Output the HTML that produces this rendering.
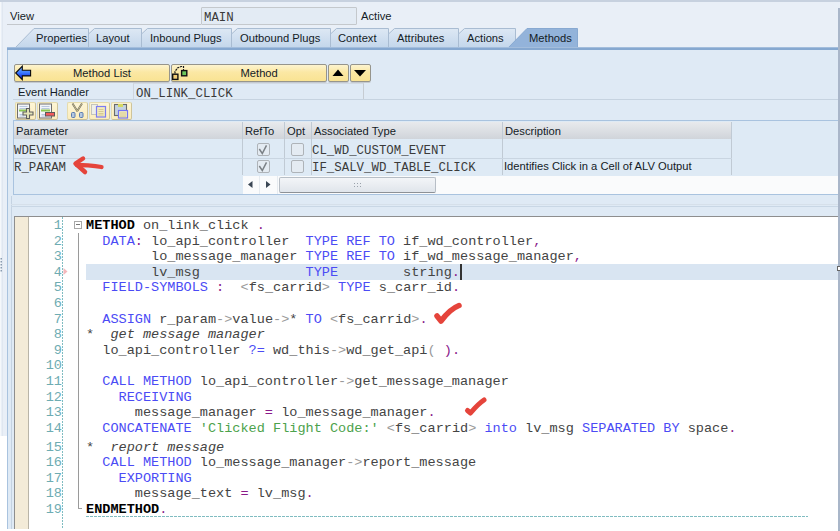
<!DOCTYPE html>
<html><head><meta charset="utf-8">
<style>
*{margin:0;padding:0;box-sizing:border-box}
html,body{width:840px;height:531px;overflow:hidden}
body{position:relative;background:#e9eff7;font-family:"Liberation Sans",sans-serif;font-size:11.2px;color:#141b26}
.a{position:absolute}
.t{position:absolute;white-space:pre;line-height:13px}
.m{font-family:"Liberation Mono",monospace;font-size:12.4px;color:#3a3a3a}
.btn{position:absolute;top:64px;height:18px;border:1px solid #96958c;border-radius:2px;background:linear-gradient(#fdf4cf,#fbe8a4 45%,#f9e393);box-shadow:0 1px 0 #c4c9cf}
.tb{position:absolute;top:102px;height:18px;width:21px;border:1px solid #e6dcae;border-right-color:#cfc49a;border-bottom-color:#c9bf98;border-radius:2px;background:linear-gradient(#fdf5d6,#fcedbd)}
.hd{position:absolute;top:122px;height:17px;background:linear-gradient(#e8eaed,#d0d4da)}
.cb{position:absolute;width:13px;height:13px;border:1px solid #aeb3b8;background:#e4ebf2;border-radius:2px}
.code{position:absolute;left:86px;top:218px;font-family:"Liberation Mono",monospace;font-size:13.56px;line-height:15.6px;white-space:pre;color:#444}
.k{color:#4b4bf5}
.p{color:#8a1a8a}
.g{color:#9a9a9a}
.s{color:#4ca24c}
.b{font-weight:bold;color:#000}
.c{font-style:italic}
.num{position:absolute;left:28px;width:34px;top:218px;text-align:right;font-family:"Liberation Mono",monospace;font-size:13.56px;line-height:15.6px;white-space:pre;color:#6eacb2}
</style></head><body>
<!-- frame strips -->
<div class="a" style="left:0;top:0;width:840px;height:2px;background:#c7d1df"></div>
<div class="a" style="left:0;top:2px;width:1px;height:434px;background:#f5f8fb"></div>
<div class="a" style="left:0;top:436px;width:7px;height:95px;background:#fff"></div>
<div class="a" style="left:2px;top:2px;width:1px;height:434px;background:#e0e7f0"></div>

<svg class="a" style="left:0;top:257px" width="3" height="16"><g fill="#8a9bb0"><rect x="0.5" y="1" width="1.5" height="1.5"/><rect x="0.5" y="4" width="1.5" height="1.5"/><rect x="0.5" y="7" width="1.5" height="1.5"/><rect x="0.5" y="10" width="1.5" height="1.5"/><rect x="0.5" y="13" width="1.5" height="1.5"/></g></svg>
<!-- View row -->
<div class="t" style="left:10px;top:10px">View</div>
<div class="a" style="left:7px;top:24px;width:194px;height:1px;background:#c3c7cc"></div>
<div class="a" style="left:201px;top:7px;width:156px;height:18px;border:1px solid #c4c8cc;border-radius:1px;background:#e3ebf4"></div>
<div class="t m" style="left:204px;top:12px">MAIN</div>
<div class="t" style="left:361px;top:10px">Active</div>

<!-- tabs -->
<svg class="a" style="left:0;top:0" width="840" height="60">
 <defs>
  <linearGradient id="tg" x1="0" y1="0" x2="0" y2="1"><stop offset="0" stop-color="#dde8f4"/><stop offset="1" stop-color="#c3d6eb"/></linearGradient>
 </defs>
 <g fill="url(#tg)" stroke="#a9bcd2" stroke-width="1">
  <polygon points="15,48 34,28.5 88.5,28.5 88.5,48"/>
  <polygon points="88.5,48 88.5,34 94.5,28.5 141.5,28.5 141.5,48"/>
  <polygon points="141.5,48 141.5,34 147.5,28.5 231.5,28.5 231.5,48"/>
  <polygon points="231.5,48 231.5,34 237.5,28.5 330.5,28.5 330.5,48"/>
  <polygon points="330.5,48 330.5,34 336.5,28.5 388.5,28.5 388.5,48"/>
  <polygon points="388.5,48 388.5,34 394.5,28.5 458.5,28.5 458.5,48"/>
  <polygon points="458.5,48 458.5,34 464.5,28.5 515.5,28.5 515.5,48"/>
 </g>
 <polygon points="508,48 527,28.5 577.5,28.5 577.5,48" fill="#93b3da" stroke="#88a9d1" stroke-width="1"/>
</svg>
<div class="t" style="left:36px;top:32px">Properties</div>
<div class="t" style="left:96px;top:32px">Layout</div>
<div class="t" style="left:150px;top:32px">Inbound Plugs</div>
<div class="t" style="left:240px;top:32px">Outbound Plugs</div>
<div class="t" style="left:338px;top:32px">Context</div>
<div class="t" style="left:397px;top:32px">Attributes</div>
<div class="t" style="left:467px;top:32px">Actions</div>
<div class="t" style="left:529px;top:32px">Methods</div>

<!-- tab strip bottom + content -->
<div class="a" style="left:7px;top:47px;width:831px;height:3px;background:#86a8d0;border-top:1px solid #a3bddc"></div>
<div class="a" style="left:7px;top:50px;width:831px;height:481px;background:#dfeaf5;border-left:1px solid #a9c3df"></div>
<div class="a" style="left:838px;top:8px;width:2px;height:523px;background:#a9b6c9"></div>

<!-- buttons -->
<div class="btn" style="left:14px;width:156px"></div>
<div class="btn" style="left:171px;width:156px"></div>
<div class="btn" style="left:328px;width:21px"></div>
<div class="btn" style="left:350px;width:21px"></div>
<svg class="a" style="left:14px;top:65px" width="18" height="16">
 <defs><linearGradient id="ag" x1="0" y1="0" x2="0" y2="1"><stop offset="0" stop-color="#7ab8ff"/><stop offset="0.5" stop-color="#3a78ff"/><stop offset="1" stop-color="#0008d8"/></linearGradient></defs>
 <path d="M1.7,8 L8.3,1.2 L8.3,5.2 L16.6,5.2 L16.6,10.9 L8.3,10.9 L8.3,14.6 Z" fill="url(#ag)" stroke="#0a0a0a" stroke-width="1.1" stroke-linejoin="miter"/>
</svg>
<div class="t" style="left:73px;top:67px">Method List</div>
<svg class="a" style="left:171px;top:64px" width="18" height="18">
 <path d="M4,9.5 L4,7.5 L6.5,4 L10,2.5 L12.5,2.5 L12.5,6.5" fill="none" stroke="#1a1a1a" stroke-width="1.2" stroke-dasharray="2.2,0.8"/>
 <rect x="1.7" y="10.2" width="5.2" height="5.2" fill="#f3cf78" stroke="#111" stroke-width="1.4"/>
 <rect x="10.6" y="6.6" width="5.2" height="5.2" fill="#6cc85c" stroke="#111" stroke-width="1.4"/>
</svg>
<div class="t" style="left:240.5px;top:67px">Method</div>
<svg class="a" style="left:328px;top:64px" width="44" height="18">
 <polygon points="10,5.5 15.5,12 4.5,12" fill="#000"/>
 <polygon points="26,6 38,6 32,12.5" fill="#000"/>
</svg>

<!-- event handler -->
<div class="t" style="left:18px;top:86px">Event Handler</div>
<div class="a" style="left:133px;top:83px;width:231px;height:17px;border-right:1px solid #c6ccd2;border-left:1px solid #cfd6de;border-top:1px solid #d3dbe4"></div>
<div class="a" style="left:13px;top:99px;width:825px;height:1px;background:#c6d3e0"></div>
<div class="t m" style="left:136px;top:88px">ON_LINK_CLICK</div>

<!-- toolbar -->
<div class="tb" style="left:15px"></div>
<div class="tb" style="left:37px"></div>
<div class="tb" style="left:67px"></div>
<div class="tb" style="left:89px"></div>
<div class="tb" style="left:111px"></div>
<svg class="a" style="left:0;top:100px" width="140" height="22">
 <!-- insert row -->
 <rect x="17.5" y="4" width="12" height="14" fill="#f2f5f9" stroke="#6e6e6e" stroke-width="1"/>
 <path d="M19.5,6.5h8M19.5,8.5h8M19.5,14.5h5M19.5,16h5" stroke="#b8c8de" stroke-width="1"/>
 <rect x="19" y="9.5" width="9" height="2" fill="#8cc850"/>
 <path d="M26.5,8.5 h3 v3.5 h3.5 v3 h-3.5 v3.5 h-3 v-3.5 h-3.5 v-3 h3.5z" fill="#e6e6b8" stroke="#5e5e5e" stroke-width="1.1"/>
 <!-- delete row -->
 <rect x="39.5" y="4" width="12" height="14" fill="#f2f5f9" stroke="#6e6e6e" stroke-width="1"/>
 <path d="M41.5,6.5h8M41.5,8.5h8M41.5,14.5h5M41.5,16h5" stroke="#b8c8de" stroke-width="1"/>
 <rect x="41" y="9.5" width="9" height="2" fill="#8cc850"/>
 <rect x="45.5" y="12.5" width="9" height="3.5" fill="#f25a5a" stroke="#5a5a5a" stroke-width="1"/>
 <!-- scissors -->
 <path d="M72.5,3.5 L77.5,11.5 M82,3.5 L77,11.5" stroke="#666" stroke-width="1.8"/>
 <path d="M72.5,3.5 L77.5,11.5 M82,3.5 L77,11.5" stroke="#f0e090" stroke-width="0.7"/>
 <rect x="71.5" y="12.5" width="3.5" height="5" rx="1" fill="#b4c8e0" stroke="#5b7cb0" stroke-width="1"/>
 <rect x="79.5" y="12.5" width="3.5" height="5" rx="1" fill="#b4c8e0" stroke="#5b7cb0" stroke-width="1"/>
 <!-- copy -->
 <rect x="91.5" y="4.5" width="6" height="10" fill="#efefe8" stroke="#c4c4bc" stroke-width="1"/>
 <rect x="96.5" y="6.5" width="9" height="10.5" fill="#f3ebbc" stroke="#7c7cf2" stroke-width="1.2"/>
 <path d="M98.5,9.5h5M98.5,11.5h5M98.5,13.5h5M98.5,15h5" stroke="#cfc28a" stroke-width="0.8"/>
 <!-- paste -->
 <rect x="114.5" y="4.5" width="12" height="11" fill="#c4d2e0" stroke="#6a6a6a" stroke-width="1.1"/>
 <rect x="118" y="4" width="5" height="3" fill="#d4d860"/>
 <rect x="118.5" y="10.5" width="9" height="7.5" fill="#f3ebbc" stroke="#7474f2" stroke-width="1.2"/>
 <path d="M120,13h6M120,15h6M120,16.8h6" stroke="#cfc28a" stroke-width="0.8"/>
</svg>

<!-- table -->
<div class="a" style="left:13px;top:120px;width:825px;height:75px;border:1px solid #a9c3df;border-right:none;background:#deeaf5"></div>
<div class="hd" style="left:14px;width:718px"></div>
<div class="a" style="left:242px;top:122px;width:1px;height:53px;background:#c0cad4"></div>
<div class="a" style="left:284px;top:122px;width:1px;height:53px;background:#c0cad4"></div>
<div class="a" style="left:311px;top:122px;width:1px;height:53px;background:#c0cad4"></div>
<div class="a" style="left:502px;top:122px;width:1px;height:53px;background:#c0cad4"></div>
<div class="a" style="left:731px;top:122px;width:1px;height:53px;background:#c0cad4"></div>
<div class="a" style="left:14px;top:158px;width:718px;height:1px;background:#c9d5e1"></div>
<div class="t" style="left:16px;top:125px">Parameter</div>
<div class="t" style="left:245px;top:125px">RefTo</div>
<div class="t" style="left:287px;top:125px">Opt</div>
<div class="t" style="left:314px;top:125px">Associated Type</div>
<div class="t" style="left:505px;top:125px">Description</div>
<div class="t m" style="left:14px;top:145px">WDEVENT</div>
<div class="t m" style="left:14px;top:162px">R_PARAM</div>
<div class="t m" style="left:312px;top:145px">CL_WD_CUSTOM_EVENT</div>
<div class="t m" style="left:312px;top:162px">IF_SALV_WD_TABLE_CLICK</div>
<div class="t" style="left:504px;top:160px">Identifies Click in a Cell of ALV Output</div>
<div class="cb" style="left:257px;top:143px"></div>
<div class="cb" style="left:291px;top:143px"></div>
<div class="cb" style="left:257px;top:160px"></div>
<div class="cb" style="left:291px;top:160px"></div>
<svg class="a" style="left:257px;top:143px" width="13" height="30">
 <path d="M2.3,6 L5.3,10.5 L9.5,2.3" fill="none" stroke="#7b8186" stroke-width="1.5"/>
 <path d="M2.3,23 L5.3,27.5 L9.5,19.3" fill="none" stroke="#7b8186" stroke-width="1.5"/>
</svg>
<!-- h scroll -->
<div class="a" style="left:243px;top:176px;width:595px;height:18px;background:#fafbfc"></div>
<div class="a" style="left:259px;top:176px;width:1px;height:18px;background:#e6ebf0"></div>
<div class="a" style="left:277px;top:176px;width:1px;height:18px;background:#e6ebf0"></div>
<svg class="a" style="left:243px;top:176px" width="36" height="18">
 <polygon points="5,8.5 9.5,5 9.5,12" fill="#3a4654"/>
 <polygon points="23,5 27.5,8.5 23,12" fill="#3a4654"/>
</svg>
<div class="a" style="left:279px;top:177px;width:157px;height:16px;border:1px solid #b7bec6;border-bottom-color:#8d9196;border-radius:2px;background:linear-gradient(#f3f5f8,#e0e5eb)"></div>

<svg class="a" style="left:354px;top:183px" width="8" height="6"><g fill="#9aa2ab"><rect x="0" y="0" width="1" height="1"/><rect x="3" y="0" width="1" height="1"/><rect x="6" y="0" width="1" height="1"/><rect x="0" y="3" width="1" height="1"/><rect x="3" y="3" width="1" height="1"/><rect x="6" y="3" width="1" height="1"/></g></svg>
<!-- splitter band -->
<div class="a" style="left:11px;top:196px;width:1px;height:335px;background:#c5d3e2"></div>
<div class="a" style="left:11px;top:204px;width:827px;height:1px;background:#d6e0ea"></div>
<div class="a" style="left:11px;top:206px;width:827px;height:1px;background:#c9d7e5"></div>

<!-- editor -->
<div class="a" style="left:14px;top:216px;width:824px;height:315px;background:#fff;border-top:1px solid #8e8e8e;border-left:1px solid #8e8e8e"></div>
<div class="a" style="left:15px;top:217px;width:14px;height:312px;background:#f3ebd8;border-right:1px solid #b8b4a8"></div>
<div class="a" style="left:86px;top:264px;width:752px;height:16px;background:#d9e5f2"></div>
<svg class="a" style="left:0;top:0" width="840" height="531"><line x1="62.5" y1="217" x2="62.5" y2="529" stroke="#80bcc1" stroke-width="1" stroke-dasharray="2,1"/><line x1="86" y1="516.5" x2="808" y2="516.5" stroke="#80bcc1" stroke-width="1" stroke-dasharray="3,1"/></svg>
<div class="a" style="left:74px;top:221px;width:8px;height:8px;border:1px solid #a8a8a8;background:#fff"></div>
<div class="a" style="left:76px;top:224px;width:4px;height:1px;background:#777"></div>
<div class="a" style="left:78px;top:233px;width:1px;height:276px;background:#9a9a9a"></div>
<div class="a" style="left:78px;top:508px;width:4px;height:1px;background:#a0a0a0"></div>
<div class="a" style="left:460px;top:264px;width:2px;height:16px;background:#333"></div>
<div class="a" style="left:837px;top:266px;width:3px;height:5px;background:#fff;border:1px solid #666;border-right:none"></div>
<svg class="a" style="left:63px;top:268px" width="6" height="8"><polygon points="0.5,0 4.5,3.5 0.5,7" fill="#f4b8bc"/></svg>

<div class="num">1
2
3
4
5
6
7
8
9
10
11
12
13
14</div>
<div class="num" style="top:439.6px">15
16
17
18
19</div>

<div class="code"><span class="b">METHOD</span> on_link_click <span class="p">.</span>
  <span class="k">DATA</span><span class="p">:</span> lo_api_controller  <span class="k">TYPE REF TO</span> if_wd_controller<span class="p">,</span>
        lo_message_manager <span class="k">TYPE REF TO</span> if_wd_message_manager<span class="p">,</span>
        lv_msg             <span class="k">TYPE</span>        string<span class="p">.</span>
  <span class="k">FIELD-SYMBOLS</span> <span class="p">:</span>  <span class="g">&lt;</span>fs_carrid<span class="g">&gt;</span> <span class="k">TYPE</span> s_carr_id<span class="p">.</span>

  <span class="k">ASSIGN</span> r_param<span class="g">-&gt;</span>value<span class="g">-&gt;</span>* <span class="k">TO</span> <span class="g">&lt;</span>fs_carrid<span class="g">&gt;</span><span class="p">.</span>
*  <span class="c">get message manager</span>
  lo_api_controller <span class="k">?=</span> wd_this<span class="g">-&gt;</span>wd_get_api<span class="g">(</span> <span class="p">)</span><span class="p">.</span>

  <span class="k">CALL METHOD</span> lo_api_controller<span class="g">-&gt;</span>get_message_manager
    <span class="k">RECEIVING</span>
      message_manager <span class="p">=</span> lo_message_manager<span class="p">.</span>
  <span class="k">CONCATENATE</span> <span class="s">'Clicked Flight Code:'</span> <span class="g">&lt;</span>fs_carrid<span class="g">&gt;</span> <span class="k">into</span> lv_msg <span class="k">SEPARATED BY</span> space<span class="p">.</span></div>
<div class="code" style="top:439.6px">*  <span class="c">report message</span>
  <span class="k">CALL METHOD</span> lo_message_manager<span class="g">-&gt;</span>report_message
    <span class="k">EXPORTING</span>
      message_text <span class="p">=</span> lv_msg<span class="p">.</span>
<span class="b">ENDMETHOD</span><span class="p">.</span></div>

<div class="a" style="left:0;top:529px;width:838px;height:2px;background:#fff"></div>
<!-- annotations -->
<svg class="a" style="left:0;top:0" width="840" height="531">
 <g fill="none" stroke="#e5443b" stroke-linecap="round" stroke-linejoin="round">
  <path d="M83,158.5 L75.5,163.5 L85,172" stroke-width="4.5"/>
  <path d="M77,165 L88,165.3 Q96,165.8 101.5,167" stroke-width="4.3"/>
  <path d="M437,316 L441,321 Q450,309 459,305.5" stroke-width="5.5"/>
  <path d="M467.5,410.5 L470.5,413 Q478,404 484,400" stroke-width="5"/>
 </g>
</svg>
</body></html>
